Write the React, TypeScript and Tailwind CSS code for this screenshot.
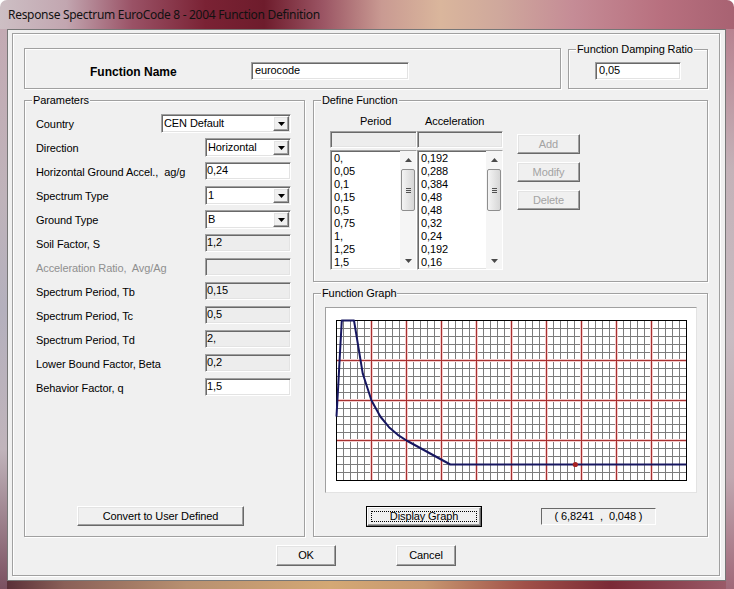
import React from "react";

const sunken =
  "border border-t-[#a0a0a0] border-l-[#a0a0a0] border-r-white border-b-white shadow-[inset_1px_1px_0_#696969,inset_-1px_-1px_0_#e3e3e3]";
const raised =
  "border border-t-white border-l-white border-r-[#696969] border-b-[#696969] shadow-[inset_-1px_-1px_0_#a0a0a0,inset_1px_1px_0_#e3e3e3] bg-[#f0f0f0]";
const group =
  "relative border border-[#a0a0a0] shadow-[inset_1px_1px_0_#ffffff,1px_1px_0_#ffffff]";

function Legend({ children }: { children: React.ReactNode }) {
  return (
    <span className="absolute left-[7px] top-[-8px] bg-[#f0f0f0] px-[1px] leading-[14px] whitespace-nowrap">
      {children}
    </span>
  );
}

function Arrow({ up = false, color = "#000" }: { up?: boolean; color?: string }) {
  return (
    <svg width="7" height="4" viewBox="0 0 7 4">
      <path d={up ? "M3.5 0 L7 4 L0 4Z" : "M0 0 L7 0 L3.5 4Z"} fill={color} />
    </svg>
  );
}

function Select({ value, w }: { value: string; w: string }) {
  return (
    <div className={`${sunken} ${w} h-[19px] bg-white flex items-stretch py-[1px] pr-[1px]`}>
      <span className="flex-1 pl-[2px] leading-[15px] whitespace-nowrap">{value}</span>
      <div className={`${raised} w-[16px] flex items-center justify-center`}>
        <Arrow />
      </div>
    </div>
  );
}

function Field({ value, disabled }: { value: string; disabled?: boolean }) {
  return (
    <div
      className={`${sunken} w-[86px] h-[18px] ${disabled ? "bg-[#ededed]" : "bg-white"} pl-[1px] leading-[15px] whitespace-nowrap`}
    >
      {value}
    </div>
  );
}

type Row = {
  label: string;
  kind: "select" | "input" | "disabled";
  value: string;
  wide?: boolean;
  dim?: boolean;
};

const rows: Row[] = [
  { label: "Country", kind: "select", value: "CEN Default", wide: true },
  { label: "Direction", kind: "select", value: "Horizontal" },
  { label: "Horizontal Ground Accel.,  ag/g", kind: "input", value: "0,24" },
  { label: "Spectrum Type", kind: "select", value: "1" },
  { label: "Ground Type", kind: "select", value: "B" },
  { label: "Soil Factor, S", kind: "disabled", value: "1,2" },
  { label: "Acceleration Ratio,  Avg/Ag", kind: "disabled", value: "", dim: true },
  { label: "Spectrum Period, Tb", kind: "disabled", value: "0,15" },
  { label: "Spectrum Period, Tc", kind: "disabled", value: "0,5" },
  { label: "Spectrum Period, Td", kind: "disabled", value: "2," },
  { label: "Lower Bound Factor, Beta", kind: "disabled", value: "0,2" },
  { label: "Behavior Factor, q", kind: "input", value: "1,5" },
];

function VScroll() {
  return (
    <div className="w-[16px] h-full flex flex-col bg-[#f5f5f5]">
      <div className="h-[18px] flex items-center justify-center">
        <Arrow up color="#4a4a4a" />
      </div>
      <div className="h-[42px] mx-[1px] rounded-[2px] border border-[#8e8e8e] bg-gradient-to-r from-[#f4f4f4] to-[#d6d6d6] flex flex-col items-center justify-center gap-[1px]">
        <div className="w-[5px] h-[1px] bg-[#505050]" />
        <div className="w-[5px] h-[1px] bg-[#505050]" />
        <div className="w-[5px] h-[1px] bg-[#505050]" />
      </div>
      <div className="flex-1" />
      <div className="h-[17px] flex items-center justify-center">
        <Arrow color="#4a4a4a" />
      </div>
    </div>
  );
}

function List({ items, w }: { items: string[]; w: string }) {
  return (
    <div className={`${sunken} ${w} h-[120px] bg-white flex`}>
      <div className="flex-1 pl-[3px] pt-[1px]">
        {items.map((t, i) => (
          <div key={i} className="h-[13px] leading-[13px] whitespace-nowrap">
            {t}
          </div>
        ))}
      </div>
      <VScroll />
    </div>
  );
}

function Graph() {
  const px = (t: number) => 1.5 + t * 35;
  const py = (a: number) => 1.5 + 160 - (a / 0.48) * 160;
  const minorV: number[] = [];
  const majorV: number[] = [];
  for (let i = 1; i < 50; i++) (i % 5 === 0 ? majorV : minorV).push(1.5 + i * 7);
  const minorH: number[] = [];
  const majorH: number[] = [];
  for (let j = 1; j < 20; j++) (j % 5 === 0 ? majorH : minorH).push(1.5 + j * 8);
  const pts: [number, number][] = [
    [0, 0.192],
    [0.05, 0.288],
    [0.1, 0.384],
    [0.15, 0.48],
    [0.5, 0.48],
    [0.75, 0.32],
    [1, 0.24],
    [1.25, 0.192],
    [1.5, 0.16],
    [1.75, 0.1371],
    [2, 0.12],
    [3.25, 0.048],
    [10, 0.048],
  ];
  const d = pts.map(([t, a], i) => `${i ? "L" : "M"}${px(t).toFixed(1)} ${py(a).toFixed(1)}`).join(" ");
  return (
    <svg width="352" height="163" viewBox="0 0 352 163">
      {minorV.map((x) => (
        <line key={"mv" + x} x1={x} y1={1.5} x2={x} y2={161.5} stroke="#7c7c7c" strokeWidth="1" />
      ))}
      {minorH.map((y) => (
        <line key={"mh" + y} x1={1.5} y1={y} x2={351.5} y2={y} stroke="#7c7c7c" strokeWidth="1" />
      ))}
      {majorV.map((x) => (
        <line key={"Hv" + x} x1={x} y1={1.5} x2={x} y2={161.5} stroke="#f2cccc" strokeWidth="3" />
      ))}
      {majorH.map((y) => (
        <line key={"Hh" + y} x1={1.5} y1={y} x2={351.5} y2={y} stroke="#f2cccc" strokeWidth="3" />
      ))}
      {majorV.map((x) => (
        <line key={"Mv" + x} x1={x} y1={1.5} x2={x} y2={161.5} stroke="#a83030" strokeWidth="1" />
      ))}
      {majorH.map((y) => (
        <line key={"Mh" + y} x1={1.5} y1={y} x2={351.5} y2={y} stroke="#a83030" strokeWidth="1" />
      ))}
      <rect x="1.5" y="1.5" width="350" height="160" fill="none" stroke="#000" strokeWidth="1" />
      <path d={d} fill="none" stroke="#161660" strokeWidth="2" strokeLinejoin="round" />
      <circle cx={px(6.8241)} cy={py(0.048)} r="2.6" fill="#a82424" />
    </svg>
  );
}

export default function App() {
  return (
    <div className="w-[734px] h-[589px] bg-white overflow-hidden font-['Liberation_Sans',Arial,sans-serif] text-[11px] tracking-[-0.1px] text-black">
      <div className="w-full h-full rounded-t-[7px] overflow-hidden flex flex-col bg-[linear-gradient(to_right,#cdbfc4_0%,#c2a6b0_9%,#9a5266_18%,#7a2234_28%,#6e1c2c_36%,#9b5564_44%,#c99a92_52%,#dab69c_60%,#cfa89c_68%,#c58c96_78%,#b8707f_90%,#a86272_100%)]">
        {/* title bar */}
        <div className="h-[29px] shrink-0 flex items-center pl-[8px] pt-[1px] font-['Noto_Sans',sans-serif] text-[12px] tracking-[-0.3px] text-[#111]">
          Response Spectrum EuroCode 8 - 2004 Function Definition
        </div>
        <div className="flex-1 flex">
          <div className="w-[7px] bg-[linear-gradient(to_bottom,#c3aab3,#bfb3ba_30%,#b4b0bd_50%,#c0b4bb_75%,#7a5060)]" />
          <div className="flex-1 flex flex-col">
            {/* client */}
            <div className="flex-1 border border-[#777777] bg-[#f0f0f0] pt-[3px] pl-[4px] pr-[5px] pb-[4px] flex">
              <div className="flex-1 border border-[#a0a0a0] shadow-[inset_1px_1px_0_#ffffff,1px_1px_0_#ffffff] pt-[14px] pl-[11px] pr-[11px] flex flex-col">
                {/* row 1 */}
                <div className="flex gap-[7px]">
                  <div className={`${group} w-[537px] h-[41px] flex items-start pl-[65px] pt-[13px]`}>
                    <span className="w-[161px] mt-[2px] leading-[16px] font-bold text-[12px] tracking-[0px]">
                      Function Name
                    </span>
                    <div className={`${sunken} w-[158px] h-[18px] bg-white pl-[3px] leading-[15px]`}>eurocode</div>
                  </div>
                  <div className={`${group} w-[140px] h-[40px] mt-[1px] pl-[26px] pt-[12px]`}>
                    <Legend>Function Damping Ratio</Legend>
                    <div className={`${sunken} w-[86px] h-[18px] bg-white pl-[3px] leading-[15px]`}>0,05</div>
                  </div>
                </div>
                {/* row 2 */}
                <div className="flex gap-[8px] mt-[11px]">
                  <div className={`${group} w-[281px] h-[437px] flex flex-col pl-[11px] pr-[13px] pt-[13px] pb-[10px]`}>
                    <Legend>Parameters</Legend>
                    {rows.map((r) => (
                      <div key={r.label} className="h-[24px] flex items-start justify-between">
                        <span
                          className={`h-[19px] leading-[21px] whitespace-pre ${r.dim ? "text-[#8f8f8f]" : ""}`}
                        >
                          {r.label}
                        </span>
                        {r.kind === "select" ? (
                          <Select value={r.value} w={r.wide ? "w-[130px]" : "w-[86px]"} />
                        ) : (
                          <Field value={r.value} disabled={r.kind === "disabled"} />
                        )}
                      </div>
                    ))}
                    <div className="mt-auto ml-[41px]">
                      <div className={`${raised} w-[167px] h-[20px] flex items-center justify-center`}>
                        Convert to User Defined
                      </div>
                    </div>
                  </div>
                  <div className="w-[395px] flex flex-col gap-[11px]">
                    {/* define function */}
                    <div className={`${group} h-[182px] flex pl-[16px] pt-[13px]`}>
                      <Legend>Define Function</Legend>
                      <div className="w-[87px] flex flex-col">
                        <div className="h-[14px] leading-[14px] pl-[30px]">Period</div>
                        <div className={`${sunken} mt-[3px] h-[17px] bg-[#ededed]`} />
                        <div className="mt-[2px]">
                          <List
                            w="w-[87px]"
                            items={["0,", "0,05", "0,1", "0,15", "0,5", "0,75", "1,", "1,25", "1,5"]}
                          />
                        </div>
                      </div>
                      <div className="w-[86px] flex flex-col">
                        <div className="h-[14px] leading-[14px] pl-[8px]">Acceleration</div>
                        <div className={`${sunken} mt-[3px] h-[17px] bg-[#ededed]`} />
                        <div className="mt-[2px]">
                          <List
                            w="w-[86px]"
                            items={["0,192", "0,288", "0,384", "0,48", "0,48", "0,32", "0,24", "0,192", "0,16"]}
                          />
                        </div>
                      </div>
                      <div className="ml-[14px] pt-[20px] flex flex-col gap-[8px]">
                        {["Add", "Modify", "Delete"].map((b) => (
                          <div
                            key={b}
                            className={`${raised} w-[63px] h-[20px] flex items-center justify-center text-[#a3a3a3]`}
                          >
                            {b}
                          </div>
                        ))}
                      </div>
                    </div>
                    {/* function graph */}
                    <div className={`${group} h-[244px] pl-[11px] pt-[13px] flex flex-col`}>
                      <Legend>Function Graph</Legend>
                      <div className="w-[372px] h-[186px] border border-t-[#a0a0a0] border-l-[#a0a0a0] border-r-[#e3e3e3] border-b-[#e3e3e3] bg-white pl-[9px] pt-[11px]">
                        <Graph />
                      </div>
                      <div className="flex items-start mt-[13px]">
                        <div className="ml-[41px] w-[116px] h-[21px] border border-black">
                          <div className={`${raised} w-full h-full p-[3px]`}>
                            <div className="w-full h-full border border-dotted border-black flex items-center justify-center leading-[11px]">
                              Display Graph
                            </div>
                          </div>
                        </div>
                        <div
                          className={`ml-[59px] mt-[2px] w-[115px] h-[17px] border border-t-[#696969] border-l-[#696969] border-r-white border-b-white bg-[#f0f0f0] flex items-center justify-center whitespace-pre`}
                        >
                          {"( 6,8241  ,  0,048 )"}
                        </div>
                      </div>
                    </div>
                  </div>
                </div>
                {/* bottom buttons */}
                <div className="mt-[8px] flex justify-center gap-[60px]">
                  <div className={`${raised} w-[60px] h-[21px] flex items-center justify-center`}>OK</div>
                  <div className={`${raised} w-[60px] h-[21px] flex items-center justify-center`}>Cancel</div>
                </div>
              </div>
            </div>
            <div className="h-[8px] shrink-0 bg-[linear-gradient(to_right,#5a3038_0%,#8a6058_8%,#b89070_25%,#d4a874_45%,#c89870_58%,#a05048_72%,#7a2a36_84%,#9a5a68_100%)]" />
          </div>
          <div className="w-[8px] flex flex-col">
            <div className="flex-1 bg-[linear-gradient(to_bottom,#b88290,#c4b2b8_25%,#c8bcc2_55%,#c0a8b0_80%,#a06878)]" />
          </div>
        </div>
      </div>
    </div>
  );
}
